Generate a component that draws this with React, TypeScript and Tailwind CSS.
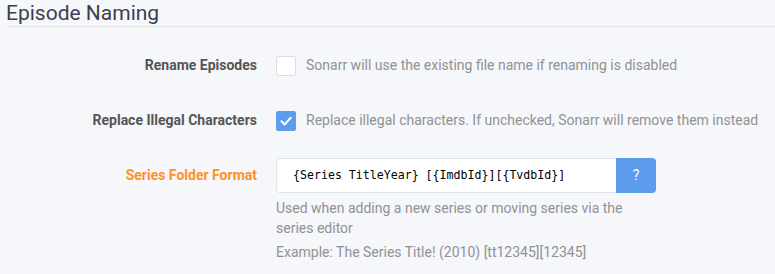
import React from "react";

const FONT = { fontFamily: "Roboto, 'Open Sans', sans-serif" };

function CheckIcon() {
  return (
    <svg viewBox="0 0 20 20" className="h-[14px] w-[14px]" fill="none">
      <path
        d="M3.5 10.5 L8 15 L16.5 5.5"
        stroke="white"
        strokeWidth="3"
        strokeLinecap="round"
        strokeLinejoin="round"
      />
    </svg>
  );
}

function Checkbox({ checked }: { checked: boolean }) {
  return (
    <span
      className={
        checked
          ? "flex h-5 w-5 shrink-0 items-center justify-center rounded-[2px] border border-[#5d9cec] bg-[#5d9cec]"
          : "flex h-5 w-5 shrink-0 items-center justify-center rounded-[2px] border border-[#dddddd] bg-white"
      }
    >
      {checked && <CheckIcon />}
    </span>
  );
}

function Row({
  label,
  advanced,
  children,
}: {
  label: string;
  advanced?: boolean;
  children: React.ReactNode;
}) {
  return (
    <div className="flex">
      <label
        className={
          advanced
            ? "w-[257px] shrink-0 text-right text-[14px] font-bold leading-[35px] text-[#ff902b]"
            : "w-[257px] shrink-0 text-right text-[14px] font-bold leading-[35px] text-[#555555]"
        }
      >
        {label}
      </label>
      <div className="ml-[19px]">{children}</div>
    </div>
  );
}

export default function App() {
  return (
    <div className="h-[274px] w-[775px] overflow-hidden bg-[#f5f7fa]" style={FONT}>
      <div className="ml-[6px] border-b border-[#e5e5e5] text-[21px] leading-[26px] text-[#3a3f51]">
        Episode Naming
      </div>
      <div className="mt-[21px] flex flex-col gap-5">
        <Row label="Rename Episodes">
          <div className="flex h-[35px] items-center gap-[10px]">
            <Checkbox checked={false} />
            <span className="text-[14px] text-[#909293]">
              Sonarr will use the existing file name if renaming is disabled
            </span>
          </div>
        </Row>
        <Row label="Replace Illegal Characters">
          <div className="flex h-[35px] items-center gap-[10px]">
            <Checkbox checked />
            <span className="text-[14px] text-[#909293]">
              Replace illegal characters. If unchecked, Sonarr will remove them instead
            </span>
          </div>
        </Row>
        <Row label="Series Folder Format" advanced>
          <div className="w-[380px]">
            <div className="flex h-[35px]">
              <div
                className="flex flex-1 items-center rounded-l-[4px] border border-r-0 border-[#dde6e9] bg-white pl-[16px] text-[11.6px] text-[#000]"
                style={{ fontFamily: "'DejaVu Sans Mono', monospace" }}
              >
                {"{Series TitleYear} [{ImdbId}][{TvdbId}]"}
              </div>
              <button className="flex w-[40px] items-center justify-center rounded-r-[4px] bg-[#5d9cec] text-[14px] text-white">
                ?
              </button>
            </div>
            <div className="mt-[5px] text-[14px] leading-[20px] text-[#909293]">
              Used when adding a new series or moving series via the series editor
            </div>
            <div className="mt-[4px] text-[14px] leading-[20px] text-[#909293]">
              Example: The Series Title! (2010) [tt12345][12345]
            </div>
          </div>
        </Row>
      </div>
    </div>
  );
}
